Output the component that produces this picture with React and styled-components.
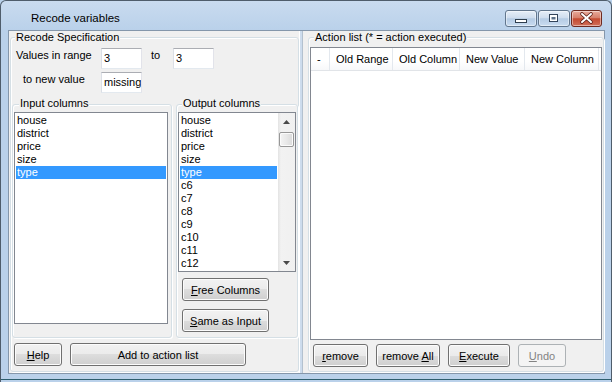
import React from 'react'
import styled, { createGlobalStyle } from 'styled-components'

const GlobalStyle = createGlobalStyle`
  html, body {
    margin: 0;
    padding: 0;
    background: #b9d1ea;
  }
  body {
    font-family: 'Liberation Sans', Arial, sans-serif;
    font-size: 11px;
    color: #000;
  }
  * {
    box-sizing: border-box;
  }
`

const Window = styled.div`
  width: 612px;
  height: 382px;
  display: flex;
  flex-direction: column;
  border: 1px solid #4f5d6b;
  border-bottom: none;
  border-radius: 6px 6px 0 0;
  background: linear-gradient(#c9dbef, #bad1ea 29px);
  overflow: hidden;
`

const TitleBar = styled.div`
  height: 29px;
  display: flex;
  align-items: flex-start;
`

const Title = styled.div`
  padding: 10px 0 0 30px;
  font-size: 11.5px;
  line-height: 14px;
`

const CaptionButtons = styled.div`
  display: flex;
  gap: 1px;
  margin: 9px 9px 0 auto;
`

const CaptionButton = styled.div`
  width: ${p => p.$w}px;
  height: 17px;
  border: 1px solid ${p => (p.$close ? '#6e2a20' : '#62768d')};
  border-radius: 3px;
  background: ${p =>
    p.$close
      ? 'linear-gradient(#e9ab9c, #d6806c 45%, #c44a31 52%, #d0705a)'
      : 'linear-gradient(#e6eef8, #cfddee 45%, #b5cbe4 52%, #c9dcf0)'};
  box-shadow: inset 0 0 0 1px rgba(255, 255, 255, 0.45);
  display: flex;
`

const Body = styled.div`
  display: flex;
  padding: 0 6px 0 7px;
`

const Client = styled.div`
  width: 597px;
  height: 344px;
  display: flex;
  padding: 6px 0 1px 1px;
  background: #f0f0f0;
  border: 1px solid #8597ab;
`

const BottomFrame = styled.div`
  height: 8px;
  background: linear-gradient(to bottom, transparent 0 5px, #2d5e6e 5px 6px, transparent 6px);
`

const GroupBox = styled.div`
  width: ${p => p.$w}px;
  height: ${p => p.$h}px;
  display: flex;
  flex-direction: column;
  align-items: flex-start;
  border: 1px solid #d5dfe5;
  border-radius: 3px;
  box-shadow: inset 1px 1px 0 #fff, 1px 1px 0 #fff;
`

const Legend = styled.div`
  margin: ${p => -p.$lift}px 0 0 ${p => p.$indent}px;
  padding: 0 1px;
  line-height: 13px;
  background: #f0f0f0;
  white-space: nowrap;
`

const FieldRow = styled.div`
  display: flex;
  align-items: flex-start;
  height: 21px;
  margin-top: ${p => p.$mt}px;
`

const FieldLabel = styled.span`
  width: ${p => p.$w}px;
  padding: 1px 0 0 ${p => p.$pl}px;
  margin-left: ${p => p.$ml || 0}px;
  line-height: 13px;
  white-space: nowrap;
`

const TextBox = styled.div`
  width: 41px;
  height: 21px;
  padding-left: 2px;
  line-height: 19px;
  background: #fff;
  border: 1px solid;
  border-color: #abadb3 #e2e3ea #e3e9ef #dbdfe6;
  white-space: nowrap;
  overflow: hidden;
`

const SubRow = styled.div`
  display: flex;
  gap: 4px;
  height: 234px;
  margin-top: 11px;
  padding-left: 1px;
`

const ListBox = styled.div`
  width: ${p => p.$w}px;
  height: ${p => p.$h}px;
  margin: 2px 0 0 1px;
  display: flex;
  background: #fff;
  border: 1px solid #828790;
`

const Items = styled.div`
  flex: 1;
  padding: 1px;
  overflow: hidden;
`

const ListItem = styled.div`
  height: 13px;
  line-height: 13px;
  padding-left: 1px;
  white-space: nowrap;
  background: ${p => (p.$selected ? '#3399ff' : 'transparent')};
  color: ${p => (p.$selected ? '#fff' : '#000')};
`

const ScrollBar = styled.div`
  width: 17px;
  display: flex;
  flex-direction: column;
  background: linear-gradient(to right, #e3e3e3, #f2f2f2 3px, #f0f0f0);
`

const ScrollArrow = styled.div`
  height: 17px;
  display: flex;
  align-items: center;
  justify-content: center;
`

const ScrollTrack = styled.div`
  flex: 1;
  padding: 2px 1px 0;
`

const ScrollThumb = styled.div`
  height: 15px;
  border: 1px solid #979797;
  border-radius: 2px;
  background: linear-gradient(to right, #f4f4f4, #e8e8e8 50%, #dadada);
  box-shadow: inset 0 0 0 1px #fbfbfb;
`

const Button = styled.button`
  display: block;
  width: ${p => p.$w}px;
  height: 23px;
  margin-top: ${p => p.$mt || 0}px;
  margin-left: ${p => p.$ml || 0}px;
  padding: 0;
  font: inherit;
  color: #000;
  border: 1px solid #707070;
  border-radius: 3px;
  background: linear-gradient(#f2f2f2, #ebebeb 50%, #dddddd 50%, #cfcfcf);
  box-shadow: inset 0 0 0 1px #fcfcfc;

  &:disabled {
    color: #838383;
    border-color: #adb2b5;
    background: #f4f4f4;
    box-shadow: none;
  }
`

const ButtonRow = styled.div`
  display: flex;
  gap: ${p => p.$gap}px;
  margin-top: ${p => p.$mt}px;
  padding-left: ${p => p.$pl}px;
`

const Splitter = styled.div`
  width: 9px;
  margin: -6px 0 -1px;
  background: linear-gradient(to right, #fff 0 1px, #cddced 1px 3px, #b3c1cf 3px 4px, transparent 4px);
`

const ListView = styled.div`
  width: 292px;
  height: 293px;
  margin: 3px 0 0 1px;
  background: #fff;
  border: 1px solid #828790;
`

const HeaderRow = styled.div`
  display: flex;
  height: 23px;
  background: linear-gradient(#fff, #fff 60%, #f7f8fa);
  border-bottom: 1px solid #e1e4e8;
`

const HeaderCell = styled.div`
  width: ${p => p.$w}px;
  padding-left: 6px;
  line-height: 22px;
  border-right: 1px solid #e3e8ee;
  white-space: nowrap;
`

const inputColumns = ['house', 'district', 'price', 'size', 'type']
const outputColumns = [...inputColumns, 'c6', 'c7', 'c8', 'c9', 'c10', 'c11', 'c12']
const actionColumns = [
  { label: '-', width: 19 },
  { label: 'Old Range', width: 63 },
  { label: 'Old Column', width: 67 },
  { label: 'New Value', width: 65 },
  { label: 'New Column', width: 74 },
]

const MinimizeGlyph = () => (
  <svg width="30" height="15">
    <rect x="9.5" y="8.5" width="11" height="3" fill="#fff" stroke="#2f3e4e" />
  </svg>
)

const MaximizeGlyph = () => (
  <svg width="30" height="15">
    <rect x="10" y="3" width="9" height="8" fill="#33445a" />
    <rect x="11" y="4" width="7" height="6" fill="#fff" />
    <rect x="12.5" y="6" width="4" height="2.5" fill="#5d7189" />
  </svg>
)

const CloseGlyph = () => (
  <svg width="29" height="15">
    <path d="M10 3 L19 11 M19 3 L10 11" stroke="#5a1f17" strokeWidth="3.6" strokeLinecap="round" />
    <path d="M10 3 L19 11 M19 3 L10 11" stroke="#fff" strokeWidth="2" strokeLinecap="round" />
  </svg>
)

const Arrow = ({ down }) => (
  <svg width="7" height="4">
    <polygon points={down ? '0,0 7,0 3.5,4' : '0,4 7,4 3.5,0'} fill="#4a4a4a" />
  </svg>
)

export default function App() {
  return (
    <>
      <GlobalStyle />
      <Window>
        <TitleBar>
          <Title>Recode variables</Title>
          <CaptionButtons>
            <CaptionButton $w={32}>
              <MinimizeGlyph />
            </CaptionButton>
            <CaptionButton $w={32}>
              <MaximizeGlyph />
            </CaptionButton>
            <CaptionButton $w={31} $close>
              <CloseGlyph />
            </CaptionButton>
          </CaptionButtons>
        </TitleBar>

        <Body>
          <Client>
            <GroupBox $w={289} $h={335}>
              <Legend $lift={7} $indent={4}>Recode Specification</Legend>
              <FieldRow $mt={4}>
                <FieldLabel $w={90} $pl={5}>Values in range</FieldLabel>
                <TextBox>3</TextBox>
                <FieldLabel $w={22} $pl={0} $ml={9}>to</FieldLabel>
                <TextBox>3</TextBox>
              </FieldRow>
              <FieldRow $mt={3}>
                <FieldLabel $w={90} $pl={12}>to new value</FieldLabel>
                <TextBox>missing</TextBox>
              </FieldRow>

              <SubRow>
                <GroupBox $w={160} $h={234}>
                  <Legend $lift={8} $indent={6}>Input columns</Legend>
                  <ListBox $w={154} $h={212}>
                    <Items>
                      {inputColumns.map(c => (
                        <ListItem key={c} $selected={c === 'type'}>{c}</ListItem>
                      ))}
                    </Items>
                  </ListBox>
                </GroupBox>

                <GroupBox $w={122} $h={234}>
                  <Legend $lift={8} $indent={5}>Output columns</Legend>
                  <ListBox $w={118} $h={160}>
                    <Items>
                      {outputColumns.map(c => (
                        <ListItem key={c} $selected={c === 'type'}>{c}</ListItem>
                      ))}
                    </Items>
                    <ScrollBar>
                      <ScrollArrow>
                        <Arrow />
                      </ScrollArrow>
                      <ScrollTrack>
                        <ScrollThumb />
                      </ScrollTrack>
                      <ScrollArrow>
                        <Arrow down />
                      </ScrollArrow>
                    </ScrollBar>
                  </ListBox>
                  <Button $w={87} $mt={6} $ml={5}>
                    <u>F</u>ree Columns
                  </Button>
                  <Button $w={87} $mt={8} $ml={5}>
                    <u>S</u>ame as Input
                  </Button>
                </GroupBox>
              </SubRow>

              <ButtonRow $gap={8} $mt={5} $pl={3}>
                <Button $w={48}>
                  <u>H</u>elp
                </Button>
                <Button $w={176}>Add to action list</Button>
              </ButtonRow>
            </GroupBox>

            <Splitter />

            <GroupBox $w={296} $h={335}>
              <Legend $lift={7} $indent={5}>Action list (* = action executed)</Legend>
              <ListView>
                <HeaderRow>
                  {actionColumns.map(col => (
                    <HeaderCell key={col.label} $w={col.width}>{col.label}</HeaderCell>
                  ))}
                </HeaderRow>
              </ListView>
              <ButtonRow $gap={8} $mt={4} $pl={4}>
                <Button $w={55}>
                  <u>r</u>emove
                </Button>
                <Button $w={64}>
                  remove <u>A</u>ll
                </Button>
                <Button $w={62}>
                  <u>E</u>xecute
                </Button>
                <Button $w={48} disabled>
                  <u>U</u>ndo
                </Button>
              </ButtonRow>
            </GroupBox>
          </Client>
        </Body>
        <BottomFrame />
      </Window>
    </>
  )
}
